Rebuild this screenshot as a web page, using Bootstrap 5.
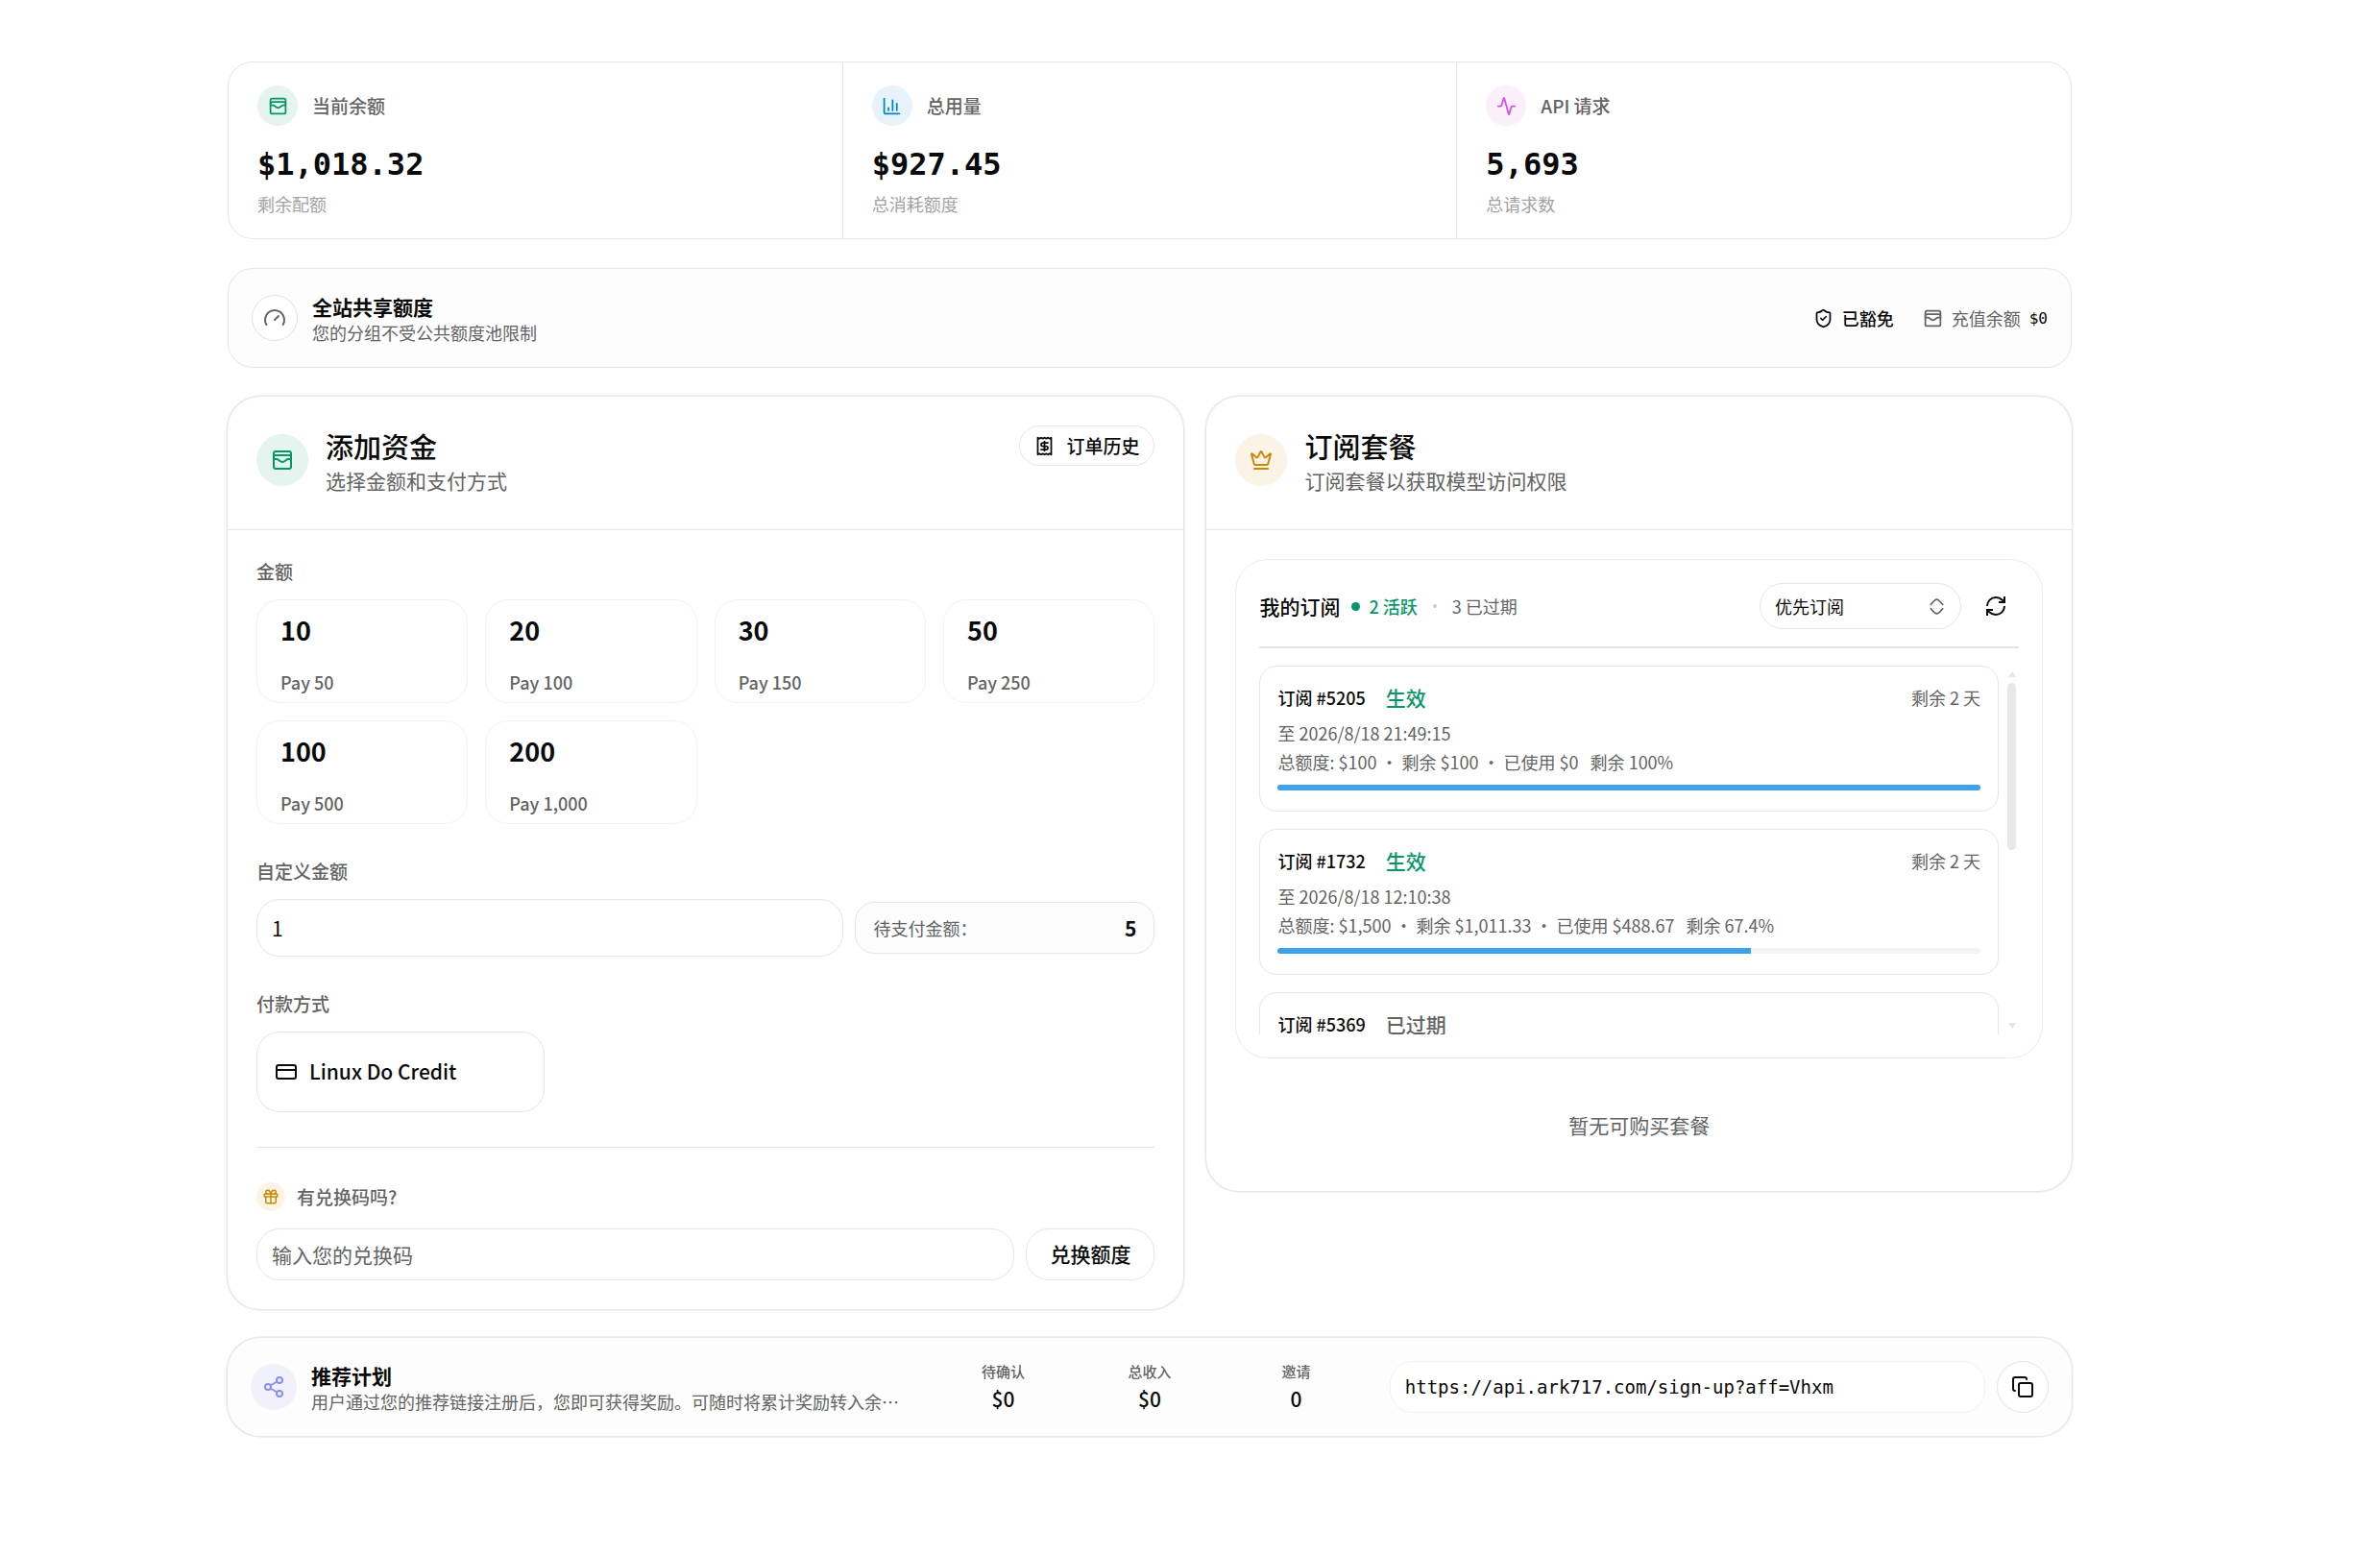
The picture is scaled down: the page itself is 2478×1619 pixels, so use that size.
<!DOCTYPE html>
<html lang="zh-CN">
<head>
<meta charset="utf-8">
<meta name="viewport" content="width=device-width, initial-scale=1">
<title>钱包</title>
<link href="https://cdn.jsdelivr.net/npm/bootstrap@5.3.0/dist/css/bootstrap.min.css" rel="stylesheet">
<style>
:root{--ink:#0a0a0a;--soft:#636363;--faint:#a3a3a3;--line:#e5e5e5;--pale:#f3f3f3;--green:#059669}
body{font-family:"Noto Sans CJK SC",sans-serif;font-size:18px;line-height:27px;color:var(--ink);background:#fff;padding-right:84px}
main{max-width:1920px;padding:64px 0 96px}
svg{fill:none;stroke:currentColor;stroke-width:2;stroke-linecap:round;stroke-linejoin:round;flex:none;display:block}
.i18{width:18px;height:18px}.i21{width:21px;height:21px}.i24{width:24px;height:24px}
.stack{display:flex;flex-direction:column;gap:30px}
.mono{font-family:"DejaVu Sans Mono","Noto Sans CJK SC",monospace}
.soft{color:var(--soft)}.green{color:var(--green)}
.t21{font-size:21px;line-height:32px}
.w5{font-weight:500}.w6{font-weight:600}
.g9{gap:9px}.g12{gap:12px}.g15{gap:15px}.g18{gap:18px}
.panel{border:1px solid var(--line);border-radius:26px}
.tinted{background:#fdfdfd}
.ringed{border-radius:34px;box-shadow:0 0 0 1px #e6e6e6,0 0 0 2px #f3f3f3}
.dot-icon{border-radius:50%;display:grid;place-items:center;flex:none;width:48px;height:48px}
.s30{width:30px;height:30px}.s42{width:42px;height:42px}.s54{width:54px;height:54px}
.bg-green{background:#e6f4f0;color:var(--green)}.bg-sky{background:#e6f3fb;color:#0284c7}.bg-pink{background:#fbeffb;color:#d152de}
.bg-gold{background:#faf3e6;color:#ca8a04}.bg-indigo{background:#f1f1fc;color:#8b8ff0}
.caption-label{font-size:19px;line-height:26px;font-weight:500;color:var(--soft)}
.stat{padding:24px 30px 22px}
.stat + .stat{border-left:1px solid var(--line)}
.figure-num{font-size:32px;line-height:40px;font-weight:700;margin:20px 0 8px}
.faint{color:var(--faint)}
.bar{padding:0 24px;min-height:104px}
.bar-text{padding-top:4px;min-width:0}
.bar-title{font-size:21px;line-height:27px;font-weight:700}
.columns{display:grid;grid-template-columns:21fr 19fr;gap:24px;align-items:start}
.panel-head{padding:30px;min-height:139px;border-bottom:1px solid var(--line)}
.panel-head .s54{margin-top:9px}
.head-title{font-size:29px;line-height:40px;font-weight:500;margin:1px 0 0}
.panel-body{padding:30px}
.pill{border:1px solid var(--line);background:#fff;border-radius:24px;color:var(--ink);font-weight:500}
.pill:hover{background:#f7f7f7;border-color:var(--line)}
.btn-history{font-size:19px;line-height:26px;height:42px;padding:0 15px;gap:12px}
.block + .block{margin-top:36px}
.block > .caption-label{display:block;margin-bottom:16px}
.amounts{display:grid;grid-template-columns:repeat(4,1fr);gap:18px}
.amount{border:1px solid var(--pale);border-radius:24px;background:#fff;text-align:left;padding:13px 24px 7px;height:108px;color:var(--ink);display:flex;flex-direction:column;justify-content:space-between}
.amount b{font-size:27px;line-height:36px;font-weight:600}
.amount span{color:var(--soft);font-weight:500;font-size:18px;line-height:27px}
.field{border:1px solid var(--line);border-radius:24px;font-size:21px;color:var(--ink);padding:0 15px;height:54px}
.field::placeholder{color:var(--soft)}
.tall{height:60px}
.preview{width:312px;height:54px;border:1px solid var(--line);border-radius:20px;background:#fcfcfc;padding:0 18px}
.pay{height:84px;width:300px;padding:0 18px;gap:12px;font-size:21px}
.redeem{height:54px;padding:0 24px;font-size:21px;white-space:nowrap}
.rule{border-top:1px solid var(--line);margin:36px 0}
.code-head{margin-bottom:18px}
.subs{border:1px solid #ebebeb;border-radius:34px;padding:24px}
.order-select{width:210px;height:48px;border:1px solid var(--line);border-radius:24px;font-size:18px;padding:0 15px;color:var(--ink);background-image:url("data:image/svg+xml,%3Csvg xmlns='http://www.w3.org/2000/svg' viewBox='0 0 24 24' fill='none' stroke='%23636363' stroke-width='2' stroke-linecap='round' stroke-linejoin='round'%3E%3Cpath d='M19 9.500s-4.800-6-7-6-7 6-7 6M19 14.500s-4.800 6-7 6-7-6-7-6'/%3E%3C/svg%3E");background-size:21px 21px;background-position:right 14px center}
.icon-btn{width:48px;height:48px;border:0;padding:0;margin-left:12px;display:grid;place-items:center;color:var(--ink)}
.live{width:9px;height:9px;border-radius:50%;background:var(--green);margin:0 9px 0 12px}
.sep{width:4px;height:4px;border-radius:50%;background:#ccc}
.split{border-top:2px solid var(--line);margin:18px 0}
.viewport{height:384px;gap:9px}
.sub-list{overflow:hidden;gap:18px}
.sub-item{border:1px solid var(--line);border-radius:18px;padding:17px 18px 21px;flex:none}
.state{font-size:21px;line-height:30px;font-weight:500;margin-left:21px}
.until{margin:9px 0 3px}
.quota{white-space:pre}
.meter{height:6px;border-radius:3px;background:#f4f4f4;margin-top:10px}
.meter .progress-bar{background:#3ba2ec}
.scroller{width:9px;margin-right:3px;padding:6px 0}
.scroller i{border:4px solid transparent;border-top:0;border-bottom:6px solid var(--line);width:0}
.scroller i.down{border-bottom:0;border-top:6px solid var(--line)}
.thumb{width:9px;height:174px;border-radius:5px;background:#e8e8e8;margin:6px 0 auto}
.empty{padding:53px 0}
.empty-wrap{padding-bottom:0}
.refer{display:grid;grid-template-columns:minmax(0,3fr) minmax(0,2fr) minmax(0,3fr);gap:21px;min-height:102px}
.mini{font-size:15px;line-height:24px;font-weight:500;color:var(--soft)}
.link-field{border-color:var(--pale);font-size:19px}
.copy{width:54px;height:54px;padding:0;display:grid;place-items:center;flex:none;border-radius:50%}
</style>
</head>
<body>
<svg width="0" height="0" class="position-absolute" aria-hidden="true">
<symbol id="wallet" viewBox="0 0 24 24"><rect width="18" height="18" x="3" y="3" rx="2"/><path d="M3 9a2 2 0 0 1 2-2h14a2 2 0 0 1 2 2"/><path d="M3 11h3c.8 0 1.6.3 2.1.9l1.1.9c1.6 1.6 4.1 1.6 5.7 0l1.1-.9c.5-.5 1.3-.9 2.1-.9H21"/></symbol>
</svg>
<main class="mx-auto stack">
<section class="panel row g-0">
  <div class="stat col">
    <div class="d-flex align-items-center g15"><span class="dot-icon s42 bg-green"><svg class="i21"><use href="#wallet"/></svg></span><span class="caption-label">当前余额</span></div>
    <div class="figure-num mono">$1,018.32</div><div class="faint">剩余配额</div>
  </div>
  <div class="stat col">
    <div class="d-flex align-items-center g15"><span class="dot-icon s42 bg-sky"><svg class="i21" viewBox="0 0 24 24"><path d="M3 3v16a2 2 0 0 0 2 2h16"/><path d="M18 17V9"/><path d="M13 17V5"/><path d="M8 17v-3"/></svg></span><span class="caption-label">总用量</span></div>
    <div class="figure-num mono">$927.45</div><div class="faint">总消耗额度</div>
  </div>
  <div class="stat col">
    <div class="d-flex align-items-center g15"><span class="dot-icon s42 bg-pink"><svg class="i21" viewBox="0 0 24 24"><path d="M22 12h-2.48a2 2 0 0 0-1.93 1.46l-2.35 8.36a.25.25 0 0 1-.48 0L9.24 2.18a.25.25 0 0 0-.48 0l-2.35 8.36A2 2 0 0 1 4.49 12H2"/></svg></span><span class="caption-label">API 请求</span></div>
    <div class="figure-num mono">5,693</div><div class="faint">总请求数</div>
  </div>
</section>

<section class="panel tinted bar d-flex align-items-center g15">
  <span class="dot-icon border bg-white soft"><svg class="i24" viewBox="0 0 24 24"><path d="m12 14 4-4"/><path d="M3.34 19a10 10 0 1 1 17.32 0"/></svg></span>
  <div class="bar-text"><div class="bar-title">全站共享额度</div><div class="soft">您的分组不受公共额度池限制</div></div>
  <div class="ms-auto d-flex align-items-center" style="gap:30px">
    <div class="d-flex align-items-center g9"><svg class="i21" viewBox="0 0 24 24"><path d="M20 13c0 5-3.500 7.500-7.660 8.950a1 1 0 0 1-.67-.01C7.500 20.500 4 18 4 13V6a1 1 0 0 1 1-1c2 0 4.500-1.200 6.240-2.720a1.170 1.170 0 0 1 1.520 0C14.510 3.810 17 5 19 5a1 1 0 0 1 1 1z"/><path d="m9 12 2 2 4-4"/></svg><span class="w5">已豁免</span></div>
    <div class="d-flex align-items-center g9"><svg class="i21 soft"><use href="#wallet"/></svg><span class="soft">充值余额</span><span class="mono" style="font-size:16px">$0</span></div>
  </div>
</section>

<div class="columns">
<section class="ringed">
  <div class="panel-head d-flex g18">
    <span class="dot-icon s54 bg-green"><svg class="i24"><use href="#wallet"/></svg></span>
    <div class="flex-fill"><h2 class="head-title">添加资金</h2><div class="t21 soft">选择金额和支付方式</div></div>
    <button type="button" class="btn pill btn-history d-flex align-items-center"><svg class="i21" viewBox="0 0 24 24"><path d="M4 2v20l2-1 2 1 2-1 2 1 2-1 2 1 2-1 2 1V2l-2 1-2-1-2 1-2-1-2 1-2-1-2 1Z"/><path d="M16 8h-6a2 2 0 1 0 0 4h4a2 2 0 1 1 0 4H8"/><path d="M12 17.500v-11"/></svg>订单历史</button>
  </div>
  <div class="panel-body">
    <div class="block"><span class="caption-label">金额</span>
      <div class="amounts">
        <button type="button" class="amount"><b>10</b><span>Pay 50</span></button>
        <button type="button" class="amount"><b>20</b><span>Pay 100</span></button>
        <button type="button" class="amount"><b>30</b><span>Pay 150</span></button>
        <button type="button" class="amount"><b>50</b><span>Pay 250</span></button>
        <button type="button" class="amount"><b>100</b><span>Pay 500</span></button>
        <button type="button" class="amount"><b>200</b><span>Pay 1,000</span></button>
      </div>
    </div>
    <div class="block"><label class="caption-label" for="custom">自定义金额</label>
      <div class="d-flex align-items-center g12">
        <input id="custom" type="text" inputmode="numeric" class="form-control field tall" value="1">
        <div class="preview d-flex align-items-center justify-content-between flex-shrink-0"><span class="soft">待支付金额：</span><span class="t21 w6">5</span></div>
      </div>
    </div>
    <div class="block"><span class="caption-label">付款方式</span>
      <button type="button" class="btn pill pay d-flex align-items-center"><svg class="i24" viewBox="0 0 24 24"><rect width="20" height="14" x="2" y="5" rx="2"/><path d="M2 10h20"/></svg>Linux Do Credit</button>
    </div>
    <div class="rule"></div>
    <div class="code-head d-flex align-items-center g12"><span class="dot-icon s30 bg-gold"><svg class="i18" viewBox="0 0 24 24"><rect x="3" y="8" width="18" height="4" rx="1"/><path d="M12 8v13"/><path d="M19 12v7a2 2 0 0 1-2 2H7a2 2 0 0 1-2-2v-7"/><path d="M7.500 8a2.500 2.500 0 0 1 0-5A4.800 8 0 0 1 12 8a4.800 8 0 0 1 4.500-5 2.500 2.500 0 0 1 0 5"/></svg></span><label class="caption-label" for="code">有兑换码吗?</label></div>
    <div class="d-flex g12"><input id="code" type="text" class="form-control field" placeholder="输入您的兑换码"><button type="button" class="btn pill redeem">兑换额度</button></div>
  </div>
</section>

<section class="ringed">
  <div class="panel-head d-flex g18">
    <span class="dot-icon s54 bg-gold"><svg class="i24" viewBox="0 0 24 24"><path d="M11.562 3.266a.5.5 0 0 1 .876 0L15.390 8.870a1 1 0 0 0 1.516.294L21.183 5.500a.5.5 0 0 1 .798.519l-2.834 10.246a1 1 0 0 1-.956.734H5.810a1 1 0 0 1-.957-.734L2.020 6.020a.5.5 0 0 1 .798-.519l4.276 3.664a1 1 0 0 0 1.516-.294z"/><path d="M5 21h14"/></svg></span>
    <div><h2 class="head-title">订阅套餐</h2><div class="t21 soft">订阅套餐以获取模型访问权限</div></div>
  </div>
  <div class="panel-body empty-wrap">
    <div class="subs">
      <div class="d-flex align-items-center">
        <span class="t21 w5">我的订阅</span>
        <span class="live"></span><span class="green w5">2 活跃</span>
        <span class="sep mx-3"></span><span class="soft">3 已过期</span>
        <select class="form-select order-select ms-auto" aria-label="扣费顺序"><option>优先订阅</option><option>优先余额</option></select>
        <button type="button" class="btn icon-btn" aria-label="刷新"><svg class="i24" viewBox="0 0 24 24" style="stroke-linecap:butt;stroke-linejoin:miter"><path d="M3 12a9 9 0 0 1 9-9 9.750 9.750 0 0 1 6.740 2.740L21 8"/><path d="M21 2v6h-6"/><path d="M21 12a9 9 0 0 1-9 9 9.750 9.750 0 0 1-6.740-2.740L3 16"/><path d="M9 16H3v6"/></svg></button>
      </div>
      <div class="split"></div>
      <div class="viewport d-flex">
        <div class="sub-list d-flex flex-column flex-fill">
          <article class="sub-item">
            <div class="d-flex align-items-center"><span class="w5">订阅 #5205</span><span class="state green">生效</span><span class="soft ms-auto">剩余 2 天</span></div>
            <div class="soft until">至 2026/8/18 21:49:15</div>
            <div class="soft quota">总额度: $100 ・ 剩余 $100 ・ 已使用 $0   剩余 100%</div>
            <div class="progress meter"><div class="progress-bar" style="width:100%"></div></div>
          </article>
          <article class="sub-item">
            <div class="d-flex align-items-center"><span class="w5">订阅 #1732</span><span class="state green">生效</span><span class="soft ms-auto">剩余 2 天</span></div>
            <div class="soft until">至 2026/8/18 12:10:38</div>
            <div class="soft quota">总额度: $1,500 ・ 剩余 $1,011.33 ・ 已使用 $488.67   剩余 67.4%</div>
            <div class="progress meter"><div class="progress-bar" style="width:67.4%"></div></div>
          </article>
          <article class="sub-item">
            <div class="d-flex align-items-center"><span class="w5">订阅 #5369</span><span class="state soft">已过期</span></div>
          </article>
        </div>
        <div class="scroller d-flex flex-column align-items-center" aria-hidden="true"><i></i><div class="thumb"></div><i class="down"></i></div>
      </div>
    </div>
    <div class="empty t21 soft text-center">暂无可购买套餐</div>
  </div>
</section>
</div>

<section class="ringed tinted bar refer align-items-center">
  <div class="d-flex align-items-center g15">
    <span class="dot-icon bg-indigo"><svg class="i24" viewBox="0 0 24 24"><circle cx="18" cy="5" r="3"/><circle cx="6" cy="12" r="3"/><circle cx="18" cy="19" r="3"/><path d="m8.590 13.510 6.830 3.980M15.410 6.510l-6.820 3.980"/></svg></span>
    <div class="bar-text"><div class="bar-title">推荐计划</div><div class="soft text-truncate">用户通过您的推荐链接注册后，您即可获得奖励。可随时将累计奖励转入余额。</div></div>
  </div>
  <div class="row g-0 text-center">
    <div class="col"><div class="mini">待确认</div><div class="t21 w5">$0</div></div>
    <div class="col"><div class="mini">总收入</div><div class="t21 w5">$0</div></div>
    <div class="col"><div class="mini">邀请</div><div class="t21 w5">0</div></div>
  </div>
  <div class="d-flex g12">
    <input type="text" readonly class="form-control field link-field mono" aria-label="推荐链接" value="https://api.ark717.com/sign-up?aff=Vhxm">
    <button type="button" class="btn pill copy" aria-label="复制"><svg class="i24" viewBox="0 0 24 24"><rect width="14" height="14" x="8" y="8" rx="2"/><path d="M4 16c-1.100 0-2-.9-2-2V4c0-1.100.9-2 2-2h10c1.100 0 2 .9 2 2"/></svg></button>
  </div>
</section>
</main>
<script src="https://cdn.jsdelivr.net/npm/bootstrap@5.3.0/dist/js/bootstrap.bundle.min.js"></script>
</body>
</html>
